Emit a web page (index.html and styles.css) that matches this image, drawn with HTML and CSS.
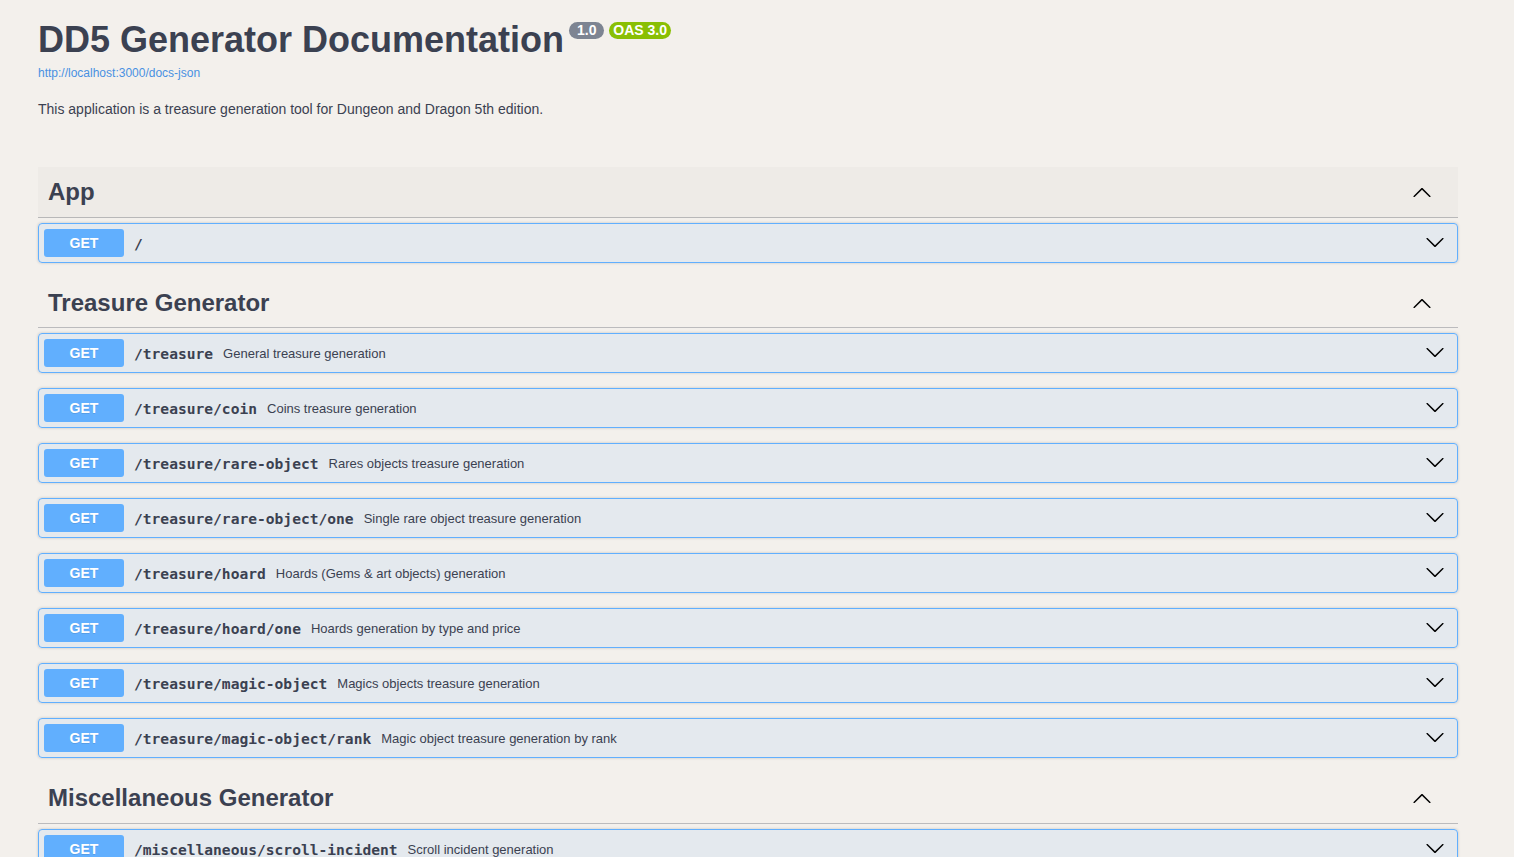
FILE: index.html
```html
<!DOCTYPE html>
<html lang="en">
<head>
<meta charset="utf-8">
<title>DD5 Generator Documentation</title>
<link rel="stylesheet" href="styles.css">
</head>
<body>
<div class="viewport">
<div class="wrapper">
  <div class="info">
    <div class="title-row">
      <h1 class="title">DD5 Generator Documentation</h1>
      <span class="badge badge-version"> 1.0 </span>
      <span class="badge badge-oas">OAS 3.0</span>
    </div>
    <a class="url" href="#">http://localhost:3000/docs-json</a>
    <p class="description">This application is a treasure generation tool for Dungeon and Dragon 5th edition.</p>
  </div>

  <section class="tag-section">
    <div class="tag tag-hover">
      <h3 class="tag-name">App</h3>
      <svg class="arrow-up" width="20" height="20" viewBox="0 0 20 20"><path d="M17.418 14.908C17.69 15.176 18.127 15.176 18.397 14.908C18.667 14.64 18.668 14.207 18.397 13.939L10.489 6.109C10.219 5.841 9.782 5.841 9.51 6.109L1.602 13.939C1.332 14.207 1.332 14.64 1.602 14.908C1.873 15.176 2.311 15.176 2.581 14.908L10 7.767L17.418 14.908Z"/></svg>
    </div>
    <div class="opblock"><div class="summary"><span class="method">GET</span><span class="path">/</span><span class="op-desc"></span><svg class="arrow-down" width="20" height="20" viewBox="0 0 20 20"><path d="M17.418 6.109c.272-.268.709-.268.979 0s.271.701 0 .969l-7.908 7.83c-.27.268-.707.268-.979 0l-7.908-7.83c-.27-.268-.27-.701 0-.969.271-.268.709-.268.979 0L10 13.25l7.418-7.141z"/></svg></div></div>
  </section>

  <section class="tag-section">
    <div class="tag tag-compact">
      <h3 class="tag-name">Treasure Generator</h3>
      <svg class="arrow-up" width="20" height="20" viewBox="0 0 20 20"><path d="M17.418 14.908C17.69 15.176 18.127 15.176 18.397 14.908C18.667 14.64 18.668 14.207 18.397 13.939L10.489 6.109C10.219 5.841 9.782 5.841 9.51 6.109L1.602 13.939C1.332 14.207 1.332 14.64 1.602 14.908C1.873 15.176 2.311 15.176 2.581 14.908L10 7.767L17.418 14.908Z"/></svg>
    </div>
    <div class="opblock"><div class="summary"><span class="method">GET</span><span class="path">/treasure</span><span class="op-desc">General treasure generation</span><svg class="arrow-down" width="20" height="20" viewBox="0 0 20 20"><path d="M17.418 6.109c.272-.268.709-.268.979 0s.271.701 0 .969l-7.908 7.83c-.27.268-.707.268-.979 0l-7.908-7.83c-.27-.268-.27-.701 0-.969.271-.268.709-.268.979 0L10 13.25l7.418-7.141z"/></svg></div></div>
    <div class="opblock"><div class="summary"><span class="method">GET</span><span class="path">/treasure/coin</span><span class="op-desc">Coins treasure generation</span><svg class="arrow-down" width="20" height="20" viewBox="0 0 20 20"><path d="M17.418 6.109c.272-.268.709-.268.979 0s.271.701 0 .969l-7.908 7.83c-.27.268-.707.268-.979 0l-7.908-7.83c-.27-.268-.27-.701 0-.969.271-.268.709-.268.979 0L10 13.25l7.418-7.141z"/></svg></div></div>
    <div class="opblock"><div class="summary"><span class="method">GET</span><span class="path">/treasure/rare-object</span><span class="op-desc">Rares objects treasure generation</span><svg class="arrow-down" width="20" height="20" viewBox="0 0 20 20"><path d="M17.418 6.109c.272-.268.709-.268.979 0s.271.701 0 .969l-7.908 7.83c-.27.268-.707.268-.979 0l-7.908-7.83c-.27-.268-.27-.701 0-.969.271-.268.709-.268.979 0L10 13.25l7.418-7.141z"/></svg></div></div>
    <div class="opblock"><div class="summary"><span class="method">GET</span><span class="path">/treasure/rare-object/one</span><span class="op-desc">Single rare object treasure generation</span><svg class="arrow-down" width="20" height="20" viewBox="0 0 20 20"><path d="M17.418 6.109c.272-.268.709-.268.979 0s.271.701 0 .969l-7.908 7.83c-.27.268-.707.268-.979 0l-7.908-7.83c-.27-.268-.27-.701 0-.969.271-.268.709-.268.979 0L10 13.25l7.418-7.141z"/></svg></div></div>
    <div class="opblock"><div class="summary"><span class="method">GET</span><span class="path">/treasure/hoard</span><span class="op-desc">Hoards (Gems &amp; art objects) generation</span><svg class="arrow-down" width="20" height="20" viewBox="0 0 20 20"><path d="M17.418 6.109c.272-.268.709-.268.979 0s.271.701 0 .969l-7.908 7.83c-.27.268-.707.268-.979 0l-7.908-7.83c-.27-.268-.27-.701 0-.969.271-.268.709-.268.979 0L10 13.25l7.418-7.141z"/></svg></div></div>
    <div class="opblock"><div class="summary"><span class="method">GET</span><span class="path">/treasure/hoard/one</span><span class="op-desc">Hoards generation by type and price</span><svg class="arrow-down" width="20" height="20" viewBox="0 0 20 20"><path d="M17.418 6.109c.272-.268.709-.268.979 0s.271.701 0 .969l-7.908 7.83c-.27.268-.707.268-.979 0l-7.908-7.83c-.27-.268-.27-.701 0-.969.271-.268.709-.268.979 0L10 13.25l7.418-7.141z"/></svg></div></div>
    <div class="opblock"><div class="summary"><span class="method">GET</span><span class="path">/treasure/magic-object</span><span class="op-desc">Magics objects treasure generation</span><svg class="arrow-down" width="20" height="20" viewBox="0 0 20 20"><path d="M17.418 6.109c.272-.268.709-.268.979 0s.271.701 0 .969l-7.908 7.83c-.27.268-.707.268-.979 0l-7.908-7.83c-.27-.268-.27-.701 0-.969.271-.268.709-.268.979 0L10 13.25l7.418-7.141z"/></svg></div></div>
    <div class="opblock"><div class="summary"><span class="method">GET</span><span class="path">/treasure/magic-object/rank</span><span class="op-desc">Magic object treasure generation by rank</span><svg class="arrow-down" width="20" height="20" viewBox="0 0 20 20"><path d="M17.418 6.109c.272-.268.709-.268.979 0s.271.701 0 .969l-7.908 7.83c-.27.268-.707.268-.979 0l-7.908-7.83c-.27-.268-.27-.701 0-.969.271-.268.709-.268.979 0L10 13.25l7.418-7.141z"/></svg></div></div>
  </section>

  <section class="tag-section">
    <div class="tag">
      <h3 class="tag-name">Miscellaneous Generator</h3>
      <svg class="arrow-up" width="20" height="20" viewBox="0 0 20 20"><path d="M17.418 14.908C17.69 15.176 18.127 15.176 18.397 14.908C18.667 14.64 18.668 14.207 18.397 13.939L10.489 6.109C10.219 5.841 9.782 5.841 9.51 6.109L1.602 13.939C1.332 14.207 1.332 14.64 1.602 14.908C1.873 15.176 2.311 15.176 2.581 14.908L10 7.767L17.418 14.908Z"/></svg>
    </div>
    <div class="opblock"><div class="summary"><span class="method">GET</span><span class="path">/miscellaneous/scroll-incident</span><span class="op-desc">Scroll incident generation</span><svg class="arrow-down" width="20" height="20" viewBox="0 0 20 20"><path d="M17.418 6.109c.272-.268.709-.268.979 0s.271.701 0 .969l-7.908 7.83c-.27.268-.707.268-.979 0l-7.908-7.83c-.27-.268-.27-.701 0-.969.271-.268.709-.268.979 0L10 13.25l7.418-7.141z"/></svg></div></div>
  </section>
</div>
</div>
</body>
</html>
```

FILE: styles.css
```css
html, body {
  margin: 0;
  padding: 0;
  background: #f3f0ec;
}

body {
  font-family: "Liberation Sans", Arial, sans-serif;
  color: #3b4151;
}

.viewport {
  height: 100vh;
  overflow: hidden;
}

.wrapper {
  width: 1420px;
  padding: 19px 0 0 38px;
}

.info {
  display: flex;
  flex-direction: column;
  align-items: flex-start;
  margin-bottom: 49px;
}

.title-row {
  display: flex;
  align-items: flex-start;
}

.title {
  margin: 0;
  font-size: 36px;
  line-height: 42px;
  font-weight: 700;
  color: #3b4151;
}

.badge {
  margin: 3px 0 0 5px;
  padding: 0 4px;
  border-radius: 57px;
  font-size: 14px;
  line-height: 17px;
  font-weight: 700;
  color: #fff;
  white-space: pre;
}

.badge-version {
  background: #7d8492;
}

.badge-oas {
  background: #89bf04;
}

.url {
  margin-top: 5px;
  font-size: 12px;
  line-height: 14px;
  color: #4990e2;
  text-decoration: none;
}

.description {
  margin: 20px 0 0;
  font-size: 14px;
  line-height: 18px;
  color: #3b4151;
}

.tag {
  display: flex;
  align-items: center;
  height: 30px;
  padding: 10px 20px 10px 10px;
  border-bottom: 1px solid rgba(59, 65, 81, 0.3);
  margin-bottom: 5px;
}

.tag-compact {
  height: 29px;
}

.tag-hover {
  background: rgba(0, 0, 0, 0.02);
}

.tag-name {
  flex: 1;
  margin: 0;
  font-size: 24px;
  font-weight: 700;
  color: #3b4151;
}

.arrow-up {
  margin-right: 6px;
  fill: #000;
}

.opblock {
  margin-bottom: 15px;
  border: 1px solid #61affe;
  border-radius: 4px;
  background: rgba(97, 175, 254, 0.1);
  box-shadow: 0 0 3px rgba(0, 0, 0, 0.19);
}

.summary {
  display: flex;
  align-items: center;
  padding: 5px;
}

.method {
  min-width: 80px;
  padding: 6px 0;
  border-radius: 3px;
  background: #61affe;
  color: #fff;
  font-size: 14px;
  line-height: 16px;
  font-weight: 700;
  text-align: center;
  text-shadow: 0 1px 0 rgba(0, 0, 0, 0.1);
}

.path {
  padding: 0 10px;
  font-family: "DejaVu Sans Mono", "Liberation Mono", monospace;
  font-size: 14.6px;
  font-weight: 700;
  color: #3b4151;
}

.op-desc {
  flex: 1;
  font-size: 13px;
  color: #3b4151;
}

.arrow-down {
  margin-right: 7px;
  margin-bottom: 3px;
  fill: #000;
}
```
